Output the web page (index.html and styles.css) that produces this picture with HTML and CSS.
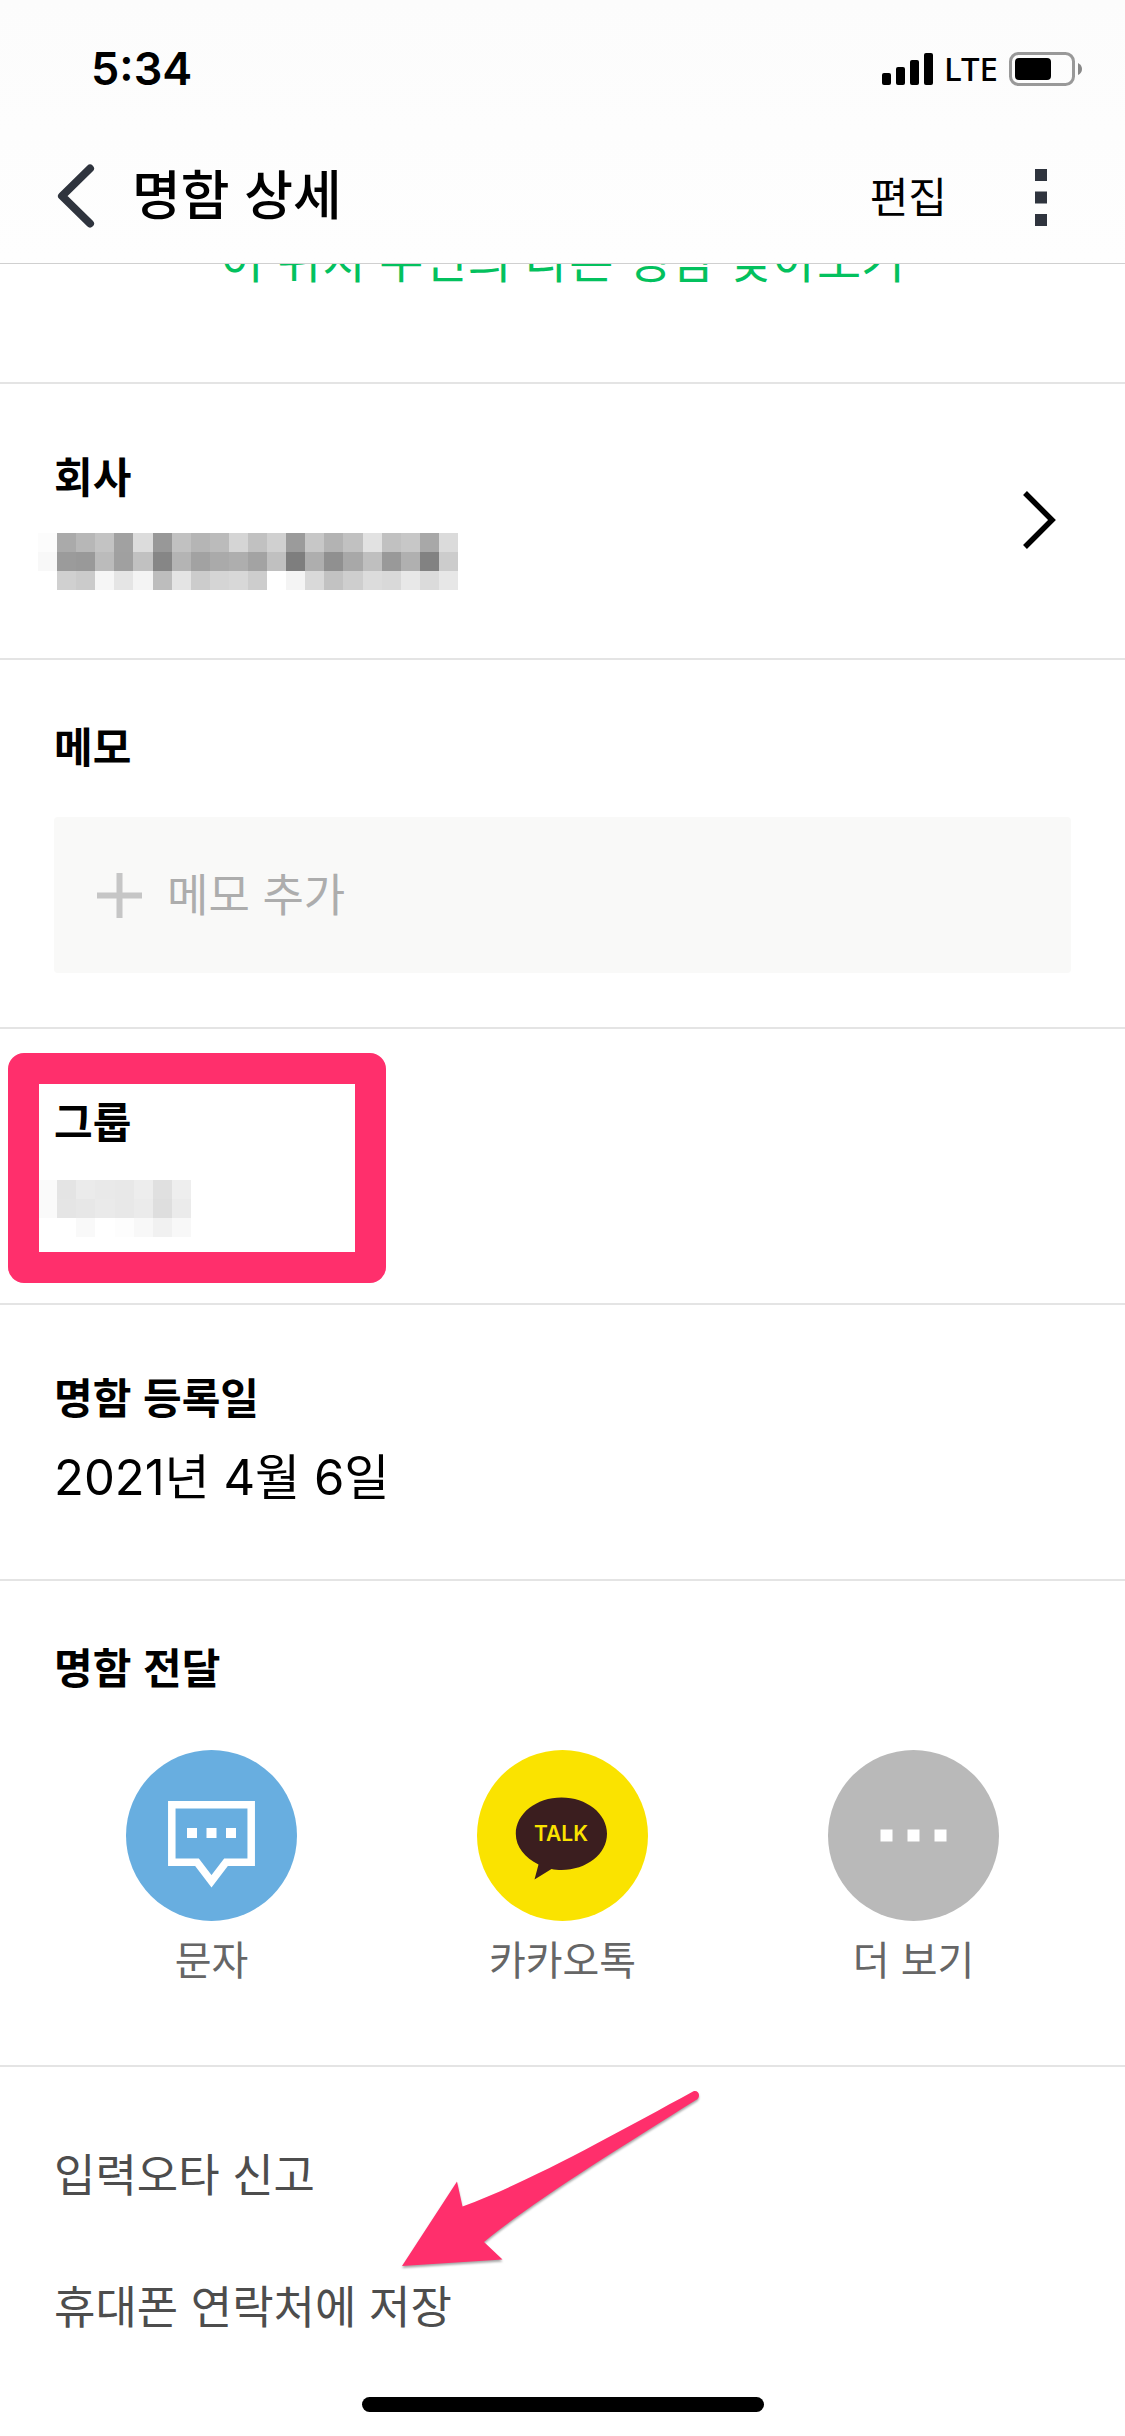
FILE: index.html
```html
<!DOCTYPE html>
<html lang="ko">
<head>
<meta charset="utf-8">
<meta name="viewport" content="width=device-width, initial-scale=1">
<title>명함 상세</title>
<link rel="stylesheet" href="styles.css">
</head>
<body>
<header class="header">
  <div class="status">
    <time class="clock">5:34</time>
    <div class="indicators">
      <svg width="51" height="32" viewBox="0 0 51 32" aria-hidden="true"><rect x="0" y="20" width="9" height="12" rx="2"/><rect x="14" y="14" width="9" height="18" rx="2"/><rect x="28" y="7" width="9" height="25" rx="2"/><rect x="42" y="0" width="9" height="32" rx="2"/></svg>
      <span class="network">LTE</span>
      <svg width="74" height="34" viewBox="0 0 74 34" aria-hidden="true"><rect x="1.5" y="1.5" width="63" height="31" rx="8" fill="none" stroke="#999" stroke-width="3"/><rect x="6" y="6" width="36" height="22" rx="4"/><path d="M69 11q4 2 4 6t-4 6z" fill="#888"/></svg>
    </div>
  </div>
  <nav class="nav">
    <button class="icon-button" type="button" aria-label="뒤로">
      <svg width="38" height="64" viewBox="0 0 38 64" fill="none" stroke="#2f343e" stroke-width="8" stroke-linecap="round" stroke-linejoin="round" aria-hidden="true"><path d="M33 4.500L5 32l28 27.500"/></svg>
    </button>
    <h1 class="title">명함 상세</h1>
    <button class="edit" type="button">편집</button>
    <button class="icon-button menu" type="button" aria-label="메뉴">
      <svg width="12" height="58" viewBox="0 0 12 58" fill="#2f343e" aria-hidden="true"><path d="M0 0h12v12H0zM0 22.500h12v12H0zM0 45h12v12H0z"/></svg>
    </button>
  </nav>
</header>
<main>
  <section class="nearby"><a href="#">이 위치 주변의 다른 명함 찾아보기</a></section>

  <section class="info company">
    <div>
      <h2>회사</h2>
      <svg class="mosaic" width="420" height="57" viewBox="0 0 22 3" preserveAspectRatio="none" shape-rendering="crispEdges" role="img" aria-label="가려진 회사 이름">
        <g><rect width="1" height="1" fill="#fcfcfc"/><rect x="1" width="1" height="1" fill="#aaa"/><rect x="2" width="1" height="1" fill="#b7b7b7"/><rect x="3" width="1" height="1" fill="#c3c3c3"/><rect x="4" width="1" height="1" fill="#a1a1a1"/><rect x="5" width="1" height="1" fill="#dcdcdc"/><rect x="6" width="1" height="1" fill="#989898"/><rect x="7" width="1" height="1" fill="#c1c1c1"/><rect x="8" width="1" height="1" fill="#b5b5b5"/><rect x="9" width="1" height="1" fill="#bbb"/><rect x="10" width="1" height="1" fill="#d5d5d5"/><rect x="11" width="1" height="1" fill="#c1c1c1"/><rect x="12" width="1" height="1" fill="#d0d0d0"/><rect x="13" width="1" height="1" fill="#9b9b9b"/><rect x="14" width="1" height="1" fill="#c7c7c7"/><rect x="15" width="1" height="1" fill="#b3b3b3"/><rect x="16" width="1" height="1" fill="#c1c1c1"/><rect x="17" width="1" height="1" fill="#e2e2e2"/><rect x="18" width="1" height="1" fill="#c1c1c1"/><rect x="19" width="1" height="1" fill="#c7c7c7"/><rect x="20" width="1" height="1" fill="#a8a8a8"/><rect x="21" width="1" height="1" fill="#dbdbdb"/></g>
        <g><rect y="1" width="1" height="1" fill="#f8f8f8"/><rect x="1" y="1" width="1" height="1" fill="#9b9b9b"/><rect x="2" y="1" width="1" height="1" fill="#999"/><rect x="3" y="1" width="1" height="1" fill="#bbb"/><rect x="4" y="1" width="1" height="1" fill="#a0a0a0"/><rect x="5" y="1" width="1" height="1" fill="#c1c1c1"/><rect x="6" y="1" width="1" height="1" fill="#868686"/><rect x="7" y="1" width="1" height="1" fill="#b4b4b4"/><rect x="8" y="1" width="1" height="1" fill="#a2a2a2"/><rect x="9" y="1" width="1" height="1" fill="#aaa"/><rect x="10" y="1" width="1" height="1" fill="#aeaeae"/><rect x="11" y="1" width="1" height="1" fill="#a3a3a3"/><rect x="12" y="1" width="1" height="1" fill="#c0c0c0"/><rect x="13" y="1" width="1" height="1" fill="#7e7e7e"/><rect x="14" y="1" width="1" height="1" fill="#aeaeae"/><rect x="15" y="1" width="1" height="1" fill="#909090"/><rect x="16" y="1" width="1" height="1" fill="#a8a8a8"/><rect x="17" y="1" width="1" height="1" fill="#bfbfbf"/><rect x="18" y="1" width="1" height="1" fill="#999"/><rect x="19" y="1" width="1" height="1" fill="#b0b0b0"/><rect x="20" y="1" width="1" height="1" fill="#828282"/><rect x="21" y="1" width="1" height="1" fill="#ccc"/></g>
        <g><rect x="1" y="2" width="1" height="1" fill="#d0d0d0"/><rect x="2" y="2" width="1" height="1" fill="#cbcbcb"/><rect x="3" y="2" width="1" height="1" fill="#f6f6f6"/><rect x="4" y="2" width="1" height="1" fill="#e5e5e5"/><rect x="5" y="2" width="1" height="1" fill="#f4f4f4"/><rect x="6" y="2" width="1" height="1" fill="#bdbdbd"/><rect x="7" y="2" width="1" height="1" fill="#e4e4e4"/><rect x="8" y="2" width="1" height="1" fill="#ccc"/><rect x="9" y="2" width="1" height="1" fill="#d5d5d5"/><rect x="10" y="2" width="1" height="1" fill="#d8d8d8"/><rect x="11" y="2" width="1" height="1" fill="#cdcdcd"/><rect x="13" y="2" width="1" height="1" fill="#f4f4f4"/><rect x="14" y="2" width="1" height="1" fill="#d9d9d9"/><rect x="15" y="2" width="1" height="1" fill="#c2c2c2"/><rect x="16" y="2" width="1" height="1" fill="#cecece"/><rect x="17" y="2" width="1" height="1" fill="#dcdcdc"/><rect x="18" y="2" width="1" height="1" fill="#d9d9d9"/><rect x="19" y="2" width="1" height="1" fill="#e8e8e8"/><rect x="20" y="2" width="1" height="1" fill="#dbdbdb"/><rect x="21" y="2" width="1" height="1" fill="#e7e7e7"/></g>
      </svg>
    </div>
    <button class="icon-button" type="button" aria-label="회사 정보 보기">
      <svg width="34" height="58" viewBox="0 0 34 58" fill="none" stroke="#000" stroke-width="5.500" aria-hidden="true"><path d="M2 2l27 27L2 56"/></svg>
    </button>
  </section>

  <section class="panel memo">
    <h2>메모</h2>
    <button class="memo-add" type="button">
      <svg width="45" height="45" viewBox="0 0 45 45" fill="#c6c6c6" aria-hidden="true"><path d="M19.500 0h6v45h-6zM0 19.500h45v6H0z"/></svg>
      <span>메모 추가</span>
    </button>
  </section>

  <section class="info group">
    <div>
      <h2>그룹</h2>
      <svg class="mosaic" width="153" height="57" viewBox="0 0 8 3" preserveAspectRatio="none" shape-rendering="crispEdges" role="img" aria-label="가려진 그룹 이름">
        <g><rect width="1" height="2" fill="#fafafa"/><rect x="1" width="1" height="1" fill="#e4e4e4"/><rect x="2" width="1" height="1" fill="#ebebeb"/><rect x="3" width="1" height="1" fill="#e9e9e9"/><rect x="4" width="1" height="1" fill="#e8e8e8"/><rect x="5" width="1" height="1" fill="#ededed"/><rect x="6" width="1" height="1" fill="#e0e0e0"/><rect x="7" width="1" height="1" fill="#eee"/></g>
        <g><rect x="1" y="1" width="1" height="1" fill="#e5e5e5"/><rect x="2" y="1" width="1" height="1" fill="#e7e7e7"/><rect x="3" y="1" width="1" height="1" fill="#eaeaea"/><rect x="4" y="1" width="1" height="1" fill="#e8e8e8"/><rect x="5" y="1" width="1" height="1" fill="#ebebeb"/><rect x="6" y="1" width="1" height="1" fill="#dedede"/><rect x="7" y="1" width="1" height="1" fill="#ebebeb"/></g>
        <g><rect x="2" y="2" width="1" height="1" fill="#f9f9f9"/><rect x="4" y="2" width="1" height="1" fill="#fdfdfd"/><rect x="5" y="2" width="1" height="1" fill="#f8f8f8"/><rect x="6" y="2" width="1" height="1" fill="#f1f1f1"/><rect x="7" y="2" width="1" height="1" fill="#f8f8f8"/></g>
      </svg>
    </div>
    <div class="highlight"></div>
  </section>

  <section class="info">
    <div>
      <h2>명함 등록일</h2>
      <p class="value">2021년 4월 6일</p>
    </div>
  </section>

  <section class="panel share">
    <h2>명함 전달</h2>
    <div class="targets">
      <button class="target" type="button">
        <svg width="171" height="171" viewBox="0 0 171 171" aria-hidden="true"><circle cx="85.500" cy="85.500" r="85.500" fill="#68aee0"/><path d="M45.800 54.800h79.400v57.500H100l-14.500 19-14.500-19H45.800z" fill="none" stroke="#fff" stroke-width="7.500"/><path d="M61 78h10v10H61zM80.500 78h10v10h-10zM100 78h10v10h-10z" fill="#fff"/></svg>
        문자
      </button>
      <button class="target" type="button">
        <svg width="171" height="171" viewBox="0 0 171 171" aria-hidden="true"><circle cx="85.500" cy="85.500" r="85.500" fill="#fae300"/><path d="M84.500 47.500c25 0 45.500 16 45.500 36.300S109.500 120 84.500 120c-3.500 0-7-.3-10-1L57.500 129.500 61.500 114.500C48 108 38.800 97 38.800 83.800 38.800 63.500 59.500 47.500 84.500 47.500z" fill="#3b1e1f"/><text class="talk" x="84" y="91" text-anchor="middle">TALK</text></svg>
        카카오톡
      </button>
      <button class="target" type="button">
        <svg width="171" height="171" viewBox="0 0 171 171" aria-hidden="true"><circle cx="85.500" cy="85.500" r="85.500" fill="#b9b9b9"/><path d="M52.500 79.500h12v12h-12zM79.500 79.500h12v12h-12zM106.500 79.500h12v12h-12z" fill="#fff"/></svg>
        더 보기
      </button>
    </div>
  </section>

  <section class="links">
    <a href="#">입력오타 신고</a>
    <a href="#">휴대폰 연락처에 저장</a>
    <svg class="arrow" width="310" height="190" viewBox="0 0 310 190" aria-hidden="true"><path d="M7 178L62 93.500 67.500 118.500C130 96 220 46 298 3.500 301 2 304 4 304 7 304 9.500 303 11 301 12 220 63 140 112 89 154L107.500 171.500z" fill="#ff2f6c"/></svg>
  </section>
</main>
<div class="home-indicator"></div>
</body>
</html>
```
FILE: styles.css
```css
* {
  box-sizing: border-box;
}

body {
  margin: 0;
  min-height: 100vh;
  display: flex;
  flex-direction: column;
  background: #fff;
  color: #000;
  font-family: Inter, "Noto Sans CJK KR", sans-serif;
}

h1,
h2,
p {
  margin: 0;
}

button {
  margin: 0;
  padding: 0;
  border: 0;
  background: none;
  color: inherit;
  font: inherit;
  cursor: pointer;
}

a {
  color: inherit;
  text-decoration: none;
}

svg {
  display: block;
  flex: none;
}

/* Header */

.header {
  position: sticky;
  top: 0;
  z-index: 2;
  background: linear-gradient(#fcfcfc, #fefefe);
  border-bottom: 1px solid #d0d0d0;
}

.status {
  display: flex;
  justify-content: space-between;
  align-items: center;
  padding: 40px 42px 27px 91px;
  line-height: 58px;
}

.clock {
  font-size: 45px;
  font-weight: 600;
}

.indicators {
  display: flex;
  align-items: center;
  gap: 11px;
}

.network {
  font-family: "Noto Sans", sans-serif;
  font-size: 33px;
  font-weight: 500;
}

.nav {
  display: flex;
  align-items: center;
  min-height: 138px;
  padding: 0 78px 0 57px;
}

.icon-button {
  padding: 4px 0 0;
}

.menu {
  padding-top: 8px;
}

.title {
  flex: 1;
  margin-left: 37px;
  padding-bottom: 4px;
  font-family: "Noto Sans CJK KR", sans-serif;
  font-size: 53px;
  font-weight: 500;
  line-height: 80px;
}

.edit {
  margin-right: 88px;
  padding-top: 2px;
  font-family: "Noto Sans CJK KR", sans-serif;
  font-size: 42px;
  line-height: 60px;
}

/* Sections */

.nearby,
.info,
.panel {
  border-bottom: 2px solid #e4e4e4;
}

.nearby {
  margin-top: -42px;
  padding-bottom: 90px;
  color: #03c15e;
  font-family: "Noto Sans CJK KR", sans-serif;
  font-size: 48px;
  line-height: 70px;
  text-align: center;
}

h2 {
  font-family: "Noto Sans CJK KR", sans-serif;
  font-size: 42px;
  font-weight: 700;
  line-height: 60px;
}

.info {
  position: relative;
  min-height: 276px;
  padding: 61px 54px 0;
}

.company {
  display: flex;
  justify-content: space-between;
}

.company .icon-button {
  align-self: flex-start;
  padding: 46px 14px 0 0;
}

.mosaic {
  margin: 28px 0 0 -16px;
}

.group .mosaic {
  margin-top: 30px;
}

.value {
  margin-top: 22px;
  font-size: 49px;
  line-height: 60px;
}

.panel {
  padding: 55px 54px 54px;
}

.memo-add {
  display: flex;
  align-items: center;
  gap: 25px;
  width: 100%;
  min-height: 156px;
  margin-top: 42px;
  padding: 0 43px;
  border-radius: 4px;
  background: #f9f9f8;
  color: #adadad;
  font-family: "Noto Sans CJK KR", sans-serif;
  font-size: 45px;
}

.memo-add span {
  padding-bottom: 6px;
}

/* Marker frame drawn over the group section */
.highlight {
  position: absolute;
  top: 24px;
  left: 8px;
  width: 378px;
  height: 230px;
  border: 31px solid #ff2f6c;
  border-radius: 16px;
}

.share {
  padding: 55px 36px 79px;
}

.share h2 {
  padding-left: 18px;
}

.targets {
  display: grid;
  grid-template-columns: repeat(3, 1fr);
  margin-top: 54px;
}

.target {
  display: flex;
  flex-direction: column;
  align-items: center;
  gap: 9px;
  color: #666;
  font-family: "Noto Sans CJK KR", sans-serif;
  font-size: 40px;
  line-height: 56px;
}

.talk {
  fill: #fae300;
  font-family: Inter, sans-serif;
  font-size: 21px;
  font-weight: 600;
}

.links {
  position: relative;
  display: flex;
  flex-direction: column;
  padding: 40px 54px 0;
  color: #4d4d4d;
  font-family: "Noto Sans CJK KR", sans-serif;
  font-size: 45px;
  line-height: 132px;
}

/* Marker arrow pointing at the save link */
.arrow {
  position: absolute;
  top: 21px;
  left: 395px;
  filter: drop-shadow(0 2px 1px rgba(0, 0, 0, 0.35));
}

.home-indicator {
  width: 402px;
  height: 15px;
  margin: auto auto 24px;
  border-radius: 8px;
  background: #000;
}
```
